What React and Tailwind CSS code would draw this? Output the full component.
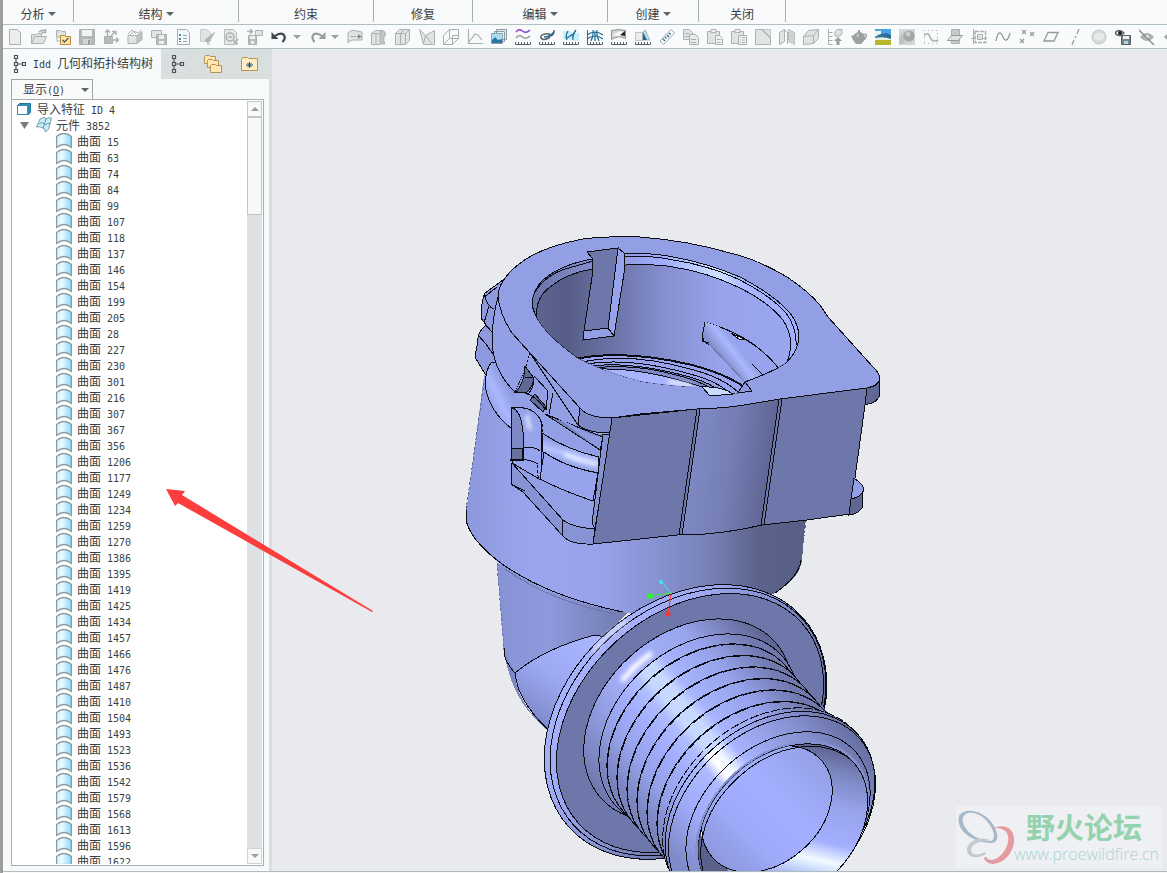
import React from 'react';

const GROUPS = [
    { name: '分析', menu: true, width: 'w-[71px]' },
    { name: '结构', menu: true, width: 'w-[165px]' },
    { name: '约束', menu: false, width: 'w-[135px]' },
    { name: '修复', menu: false, width: 'w-[99px]' },
    { name: '编辑', menu: true, width: 'w-[135px]' },
    { name: '创建', menu: true, width: 'w-[91px]' },
    { name: '关闭', menu: false, width: 'w-[87px]' },
];

const SURFACES = [
    15, 63, 74, 84, 99, 107, 118, 137, 146, 154, 199, 205, 28, 227, 230, 301,
    216, 307, 367, 356, 1206, 1177, 1249, 1234, 1259, 1270, 1386, 1395, 1419,
    1425, 1434, 1457, 1466, 1476, 1487, 1410, 1504, 1493, 1523, 1536, 1542,
    1579, 1568, 1613, 1596, 1622,
];

const G = '#acb0b0';
const L = '#e1e4e4';
const D = '#5b6062';
const B = '#1c6a92';

// little ruler under the measuring tools
const Ruler = () => <path d="M0.5 13v2.5h15V13M3.5 13v2M6.5 13v2M9.5 13v2M12.5 13v2" stroke={D} />;

const TOOLS = [
    ['新建', <path d="M2.500 0.500h8l3 3v12h-11z" fill="#eceeee" stroke={G} />],
    ['打开', <><path d="M0.500 14V5.500h5l1-1h4v3" fill={L} stroke={G} /><path d="M0.500 14.500l3-7h12l-3 7z" fill={L} stroke={G} /><path d="M8 3q3-3 6-1M14.500 0v3.500h-4" stroke={G} strokeWidth="1.500" /></>],
    ['选择工作目录', <><path d="M1.500 8V1.500h4l1 1h4V8z" fill={L} stroke={G} /><path d="M2 8v4h3" stroke={G} /><path d="M5.500 15.500v-9h4l1 1h5v8z" fill="#ffe3a3" stroke="#b98b43" /><path d="M7.500 11l2 2 4-4" stroke={D} strokeWidth="1.500" /></>],
    ['保存', <><path d="M0.500 0.500h15v15h-15z" fill="#b5b8b8" stroke={G} /><path d="M3 1h10v6H3z" fill="#f1f2f2" /><path d="M4 10h8v5H4z" fill="#d3d6d6" /><path d="M9 11h2v4H9z" fill="#999" /></>],
    ['拖动', <><path d="M1.500 7.500h8v7h-8z" fill="#b9bcbc" stroke={G} /><path d="M4.500 8V1M2 3.500L4.500 1 7 3.500M7 8l5-5M9 2.500h4V6M9 11h6M13 8.500l2.500 2.500-2.500 2.500" stroke={G} strokeWidth="1.500" /></>],
    ['模型', <><path d="M1 6.500h9v8H1z" fill={L} stroke={G} /><path d="M10 6.500l5-4v8l-5 4" fill="#bfc3c3" stroke={G} /><path d="M1 5l4-4 4 4M3 6l4-4 4 2 3-3" stroke={G} /></>],
    ['另存为', <><path d="M0.500 1.500h10v7h-10z" fill={L} stroke={G} /><path d="M5.500 5.500h10v10h-10z" fill="#b9bcbc" stroke={G} /><path d="M8 6h5v4H8zM8 12h5v3H8z" fill="#eee" /></>],
    ['属性', <><path d="M2.500 0.500h9l3 3v12h-12z" fill="#f5f8fa" stroke="#a3abaf" /><path d="M4 5h2v2H4zM4 9h2v2H4zM4 12h2v1H4z" fill="#4d87a5" /><path d="M8 6.500h4M8 9.500h4M8 12.500h4" stroke="#98a4a9" /></>],
    ['编辑', <><path d="M1.500 0.500h6l4 3v9h-10z" fill={L} stroke="#c8cccc" /><path d="M15.500 3.500L9 14l-3-3z" fill="#b5b8b8" stroke={G} /><path d="M8 15h3" stroke={G} /></>],
    ['查找', <><path d="M1.500 0.500h9l3 3v12h-12z" fill="#e6e8e8" stroke="#bbbfbf" /><circle cx="7" cy="8" r="4" stroke={G} strokeWidth="1.500" /><path d="M10 11l5 4M15 10l-4 5M5 8h4" stroke={G} strokeWidth="1.500" /></>],
    ['再生', <><path d="M1.500 6.500h8v9h-8z" fill="#b9bcbc" stroke={G} /><path d="M3 7h5v3H3zM4 12h3v3H4z" fill="#eee" /><path d="M8.500 1.500h7v5h-7z" fill={L} stroke={G} /><path d="M0 2.500h5M3 0l2.500 2.500L3 5" stroke={G} strokeWidth="1.500" /></>],
    ['撤消', <><path d="M4 7q5-4 8.500-1.500 3 3.500-1 7.500" stroke="#3f474b" strokeWidth="2.200" /><path d="M0.500 3v7h7z" fill="#3f474b" /></>, 'menu1'],
    ['重做', <><path d="M12 7Q7 3 3.500 5.500 1 9 4.500 13" stroke="#999e9e" strokeWidth="2.200" /><path d="M15.500 3v7h-7z" fill="#999e9e" /></>, 'menu2'],
    ['传送', <><path d="M1 14V4q3-4 9-2l5 1v8H6q-3 0-5 3z" fill={L} stroke={G} /><path d="M4 7.500h8" stroke="#8d9191" strokeDasharray="2 1" /><path d="M11 5l4 2.500-4 2.500z" fill="#8d9191" /></>],
    ['曲面', <><path d="M0.500 4.500l4-3h7v11l-3 3h-8z" fill={L} stroke={G} /><path d="M5 4v11M0.500 4.500H8" stroke={G} /><path d="M9 2h4q3 3 0 6-1 3 1 7H9z" fill="#c2c5c5" stroke={G} /></>],
    ['实体', <><path d="M0.500 4.500l4-4h10v11l-4 4h-10z" fill={L} stroke={G} /><path d="M0.500 4.500h10v11M10.500 4.500l4-4M5.500 4.500v11M5.500 4.500l4-4" stroke={G} /></>],
    ['修补', <><path d="M0.500 0.500l6 6 9-5v14h-11z" fill={L} stroke={G} /><path d="M6.500 6.500l-2 8M6.500 6.500l6 8" stroke={G} /></>],
    ['框架', <path d="M6.500 0.500h9v9h-9zM0.500 6.500l6-6M0.500 6.500v9h9l6-6M0.500 15.500l6-6M9.500 15.500V6.500h6" stroke={G} />],
    ['曲线图', <path d="M1.500 0v14.500H16M2 13l6-8 3 1 4 5" stroke={G} strokeWidth="1.200" />],
    ['图像', <><path d="M5.500 0.500h10v10h-10zM3.500 2.500h10v10h-10z" fill="#e7eff3" stroke="#8a9aa2" /><path d="M0.500 4.500h11v10H0.500z" fill="#a9def2" stroke="#8fa2ac" /><path d="M1 11l3-3 3 3 4-1v4H1z" fill="#25789f" /></>],
    ['曲率', <><path d="M1 3q3-4 6.500-1t7.500-1" stroke="#8a44cf" strokeWidth="1.500" /><path d="M1 9q3-4 6.500-1t7.500-1" stroke="#9aa0a0" strokeWidth="1.500" /><Ruler /></>],
    ['偏移', <><path d="M11 8.500Q4 12 2 9q-1-3 4-4 6-1 5 2 4 0 4-6" stroke={D} strokeWidth="1.500" /><path d="M5 8q6 0 10-5" stroke={B} strokeWidth="1.500" /><Ruler /></>],
    ['截面', <><path d="M0 3q4-3 8 0t8 0v8q-4 2-8 0t-8 0z" fill="#c4eefa" /><path d="M5 2q-3 5-1 9M13 1q-4 5-3 10M4 9l8-5" stroke={B} strokeWidth="1.300" /><Ruler /></>],
    ['网格', <><path d="M0 6q8-6 16 0M0 10q8-6 16 0M6 1q1 5-2 11M10 1q-1 5 2 11M8 3v9" stroke={B} strokeWidth="1.200" /><path d="M0.500 1v14" stroke={D} /><Ruler /></>],
    ['着色曲率', <><path d="M0.500 1.500q8-2 14 0v8q-7-4-14 1z" fill="#d3d5d5" stroke="#8d9292" /><path d="M2 6q6-5 11-3-3 5-6 4z" fill="#f7f7f7" /><path d="M9 6l5-4v5z" fill="#222" /><Ruler /></>],
    ['拔模', <><path d="M0.500 3.500h7v8h-7z" fill="#ededed" stroke="#c3c7c7" /><path d="M7.500 3l3-2 4 10h-7z" fill="#c4dde8" stroke="#a1b1b8" /><path d="M8 3l4 8H8z" fill={B} /><Ruler /></>],
    ['测量', <><path d="M1 12L12 0.500l3.500 3.500-11 11.500z" fill="#fff" stroke="#98a4a9" /><path d="M4 10l2 2M6 8l1.500 1.500M8 6l2 2M10 4l1.500 1.500" stroke={B} strokeWidth="1.300" /></>],
    ['复制', <><path d="M0.500 0.500h6l3 3v7h-9z" fill={L} stroke={G} /><path d="M6.500 5.500h6l3 3v7h-9z" fill="#e9ebeb" stroke={G} /><path d="M2 4.500h4M2 7.500h4M8 10.500h5M8 13.500h5" stroke={G} /></>],
    ['粘贴', <><path d="M0.500 2.500h12v12h-12z" fill={L} stroke={G} /><path d="M4 0.500h5v3H4z" fill="#eee" stroke={G} /><path d="M8.500 6.500h4l3 3v6h-7z" fill="#f1f2f2" stroke={G} /><path d="M10 10.500h4M10 13.500h4" stroke={G} /></>],
    ['选择性粘贴', <><path d="M0.500 2.500h12v12h-12z" fill={L} stroke={G} /><path d="M4 0.500h5v3H4z" fill="#eee" stroke={G} /><path d="M7.500 6.500h8v9h-8z" fill="#f1f2f2" stroke={G} /><path d="M9 8.500h1M11 8.500h3M9 11h1M11 11h3M9 13.500h1M11 13.500h3" stroke={G} /></>],
    ['倒角', <><path d="M0.500 0.500h15v15h-15z" fill={L} stroke={G} /><path d="M7 0.500h8.500V9z" fill="#dde0e0" /><path d="M7 0.500L15.500 9" stroke="#7f8484" /></>],
    ['镜像', <><path d="M0.500 3.500l5-3v12l-5 3z" fill={L} stroke={G} /><path d="M5.500 1l3 2v12" stroke={G} /><path d="M9.500 0.500l6 3v12l-6-3z" fill="#cfd2d2" stroke={G} strokeDasharray="2 1" /></>],
    ['箱体', <><path d="M0.500 7.500l5-6 10-1v9l-5 5-10 1z" fill={L} stroke={G} /><path d="M0.500 7.500l10-1v8M10.500 6.500l5-6" stroke={G} /></>],
    ['层级', <><path d="M1.500 0v15.500M1.500 3.500h4M1.500 7.500h4M1.500 11.500h4M1.500 15.500h4" stroke={G} /><path d="M8 3l2-2.500h5V5l-2 2H8z" fill={L} stroke={G} /><path d="M11 8l4 4h-2.500v4h-3v-4H7z" fill="#999d9d" /></>],
    ['渲染', <><path d="M7 1h2v2q4 1 5 5-1 5-4 7H5Q3 13 0 7l3-1q1-2 4-3z" fill="#9da1a1" /><path d="M12.500 5q4 0 2.500 3t-3 3" stroke="#8f9393" strokeWidth="1.200" /><path d="M5 6l3-1-1 4z" fill="#cfd2d2" /></>],
    ['场景', <><path d="M0 0h16v16H0z" fill="#4aa5e3" /><path d="M0 2h6v5H0z" fill="#e8f6fb" /><path d="M0 9l3-3 3-1 5-1 5 2v4H0z" fill="#2d6f94" /><path d="M0 9q8-2 16 1v1H0z" fill="#e9f2df" /><path d="M0 11h16v5H0z" fill="#b6b72f" /></>],
    ['外观', <><path d="M0 0h16v16H0z" fill="#d3d6d6" /><path d="M0 16V8l6-6v12z" fill="#bfc3c3" /><circle cx="10" cy="7" r="5.500" fill="#a3a7a7" /><circle cx="9" cy="5" r="2.500" fill="#c9cccc" /></>],
    ['点阵', <><path d="M1 1.500h14M1 14.500h14" stroke={G} strokeDasharray="1 3" /><path d="M1.500 4v9M14.500 4v9" stroke={G} strokeDasharray="1 3" /><path d="M1 7q4-5 6 1t8 3" stroke="#a9adad" strokeWidth="1.500" /></>],
    ['基准平面', <><path d="M4.500 0.500h8v14h-8z" fill="#c6caca" stroke={G} /><path d="M0.500 11.500l4-5h11l-4 5z" fill="#eceeee" fillOpacity="0.7" stroke="#949898" /></>],
    ['边界', <><path d="M4 2.500h10.500v11H4z" stroke={G} strokeWidth="1.500" strokeDasharray="4 1" /><path d="M6.500 5.500h5v5h-5z" fill={L} stroke={G} /><path d="M0 9.500h5M2.500 0v15M12 9.500h4" stroke={G} /></>],
    ['样条', <path d="M1 12C3 1 6 3 8 8s5 4 7-4" stroke="#979b9b" strokeWidth="1.300" />],
    ['基准点', <path d="M3 1l4 4M7 1L3 5M11 3l4 4M15 3l-4 4M1 10l4 4M5 10l-4 4" stroke="#979b9b" strokeWidth="1.300" />],
    ['草绘平面', <path d="M5 3.500h10l-4 8.500H1z" stroke="#979b9b" strokeWidth="1.300" />],
    ['基准轴', <path d="M12 0l-2 5M9 7l-1 2M7 11l-2 5" stroke="#979b9b" strokeWidth="1.300" />],
    ['球体', <><circle cx="8" cy="8" r="7" fill="#d6d9d9" stroke="#c3c7c7" /><path d="M3 5q5-3 10 0v5q-5 3-10 0z" fill="#e6e9e9" /></>],
    ['保存视图', <><path d="M0 4q4-5 9 0-5 5-9 0z" fill="#fff" stroke={D} strokeWidth="1.500" /><circle cx="5" cy="4" r="2" fill="#222" /><path d="M6.500 6.500h9v9h-9z" fill="#7d8285" stroke={D} /><path d="M8 7h6v3H8z" fill="#eee" /><path d="M9 12h4v3H9z" fill="#a9d9ee" /></>],
    ['隐藏', <><path d="M1 8q7-8 14 0-7 8-14 0z" fill="#acb0b0" /><circle cx="8" cy="8" r="2" fill="#eee" /><path d="M0 1l15 15" stroke="#7f8484" strokeWidth="1.300" /></>],
    ['显示', <path d="M1 8q7-8 14 0-7 8-14 0z" fill="#a0a4a4" />],
];

const Icon = ({ children, className = 'size-4' }) => (
    <svg viewBox="0 0 16 16" fill="none" className={`shrink-0 ${className}`}>{children}</svg>
);

const Caret = ({ color = '#5f6466' }) => (
    <svg viewBox="0 0 8 4" className="h-1 w-2 shrink-0"><path d="M0 0h8L4 4z" fill={color} /></svg>
);

// latin characters sit on a 6px grid beside the 12px Chinese glyphs
const Mono = ({ children }) => (
    <span className="whitespace-pre font-['DejaVu_Sans_Mono',monospace] text-[10px]">{children}</span>
);

const TreeGlyph = () => (
    <svg viewBox="0 0 14 20" fill="none" className="h-5 w-[14px] shrink-0">
        <path d="M1.500 1.500h3v3h-3zM1.500 8.500h3v3h-3zM1.500 15.500h3v3h-3zM9.500 8.500h3v3h-3zM3 5v3M3 12v3M5 10h4" stroke="#4b5052" strokeWidth="1.200" />
    </svg>
);

const FolderPath = ({ x = 0, y = 0 }) => (
    <path transform={`translate(${x} ${y})`} d="M0.500 1.500l1-1h4l1 1h5v7h-11z" fill="#ffe6b0" stroke="#b89358" />
);

const Ribbon = () => (
    <nav className="flex h-[25px] shrink-0 items-start border-b border-[#b0c0bf]">
        {GROUPS.map((g) => (
            <button key={g.name} className={`flex h-[22px] items-center justify-center gap-[3px] border-r border-[#a9adad] pt-[5px] ${g.width}`}>
                <span>{g.name}</span>
                {g.menu && <Caret />}
            </button>
        ))}
    </nav>
);

const Toolbar = () => (
    <div className="flex h-6 shrink-0 items-center overflow-hidden border-b border-[#b0c0bf]">
        {TOOLS.map(([label, art, menu]) => (
            <React.Fragment key={label}>
                <button aria-label={label} className="flex w-6 shrink-0 justify-center"><Icon>{art}</Icon></button>
                {menu && (
                    <button aria-label={`${label}列表`} className={`flex shrink-0 ${menu === 'menu1' ? 'w-[15px] pl-[2px]' : 'w-[13px] pl-[1px]'}`}>
                        <Caret color="#9a9e9e" />
                    </button>
                )}
            </React.Fragment>
        ))}
    </div>
);

const SurfaceIcon = () => (
    <Icon>
        <path d="M0.500 3.500Q8-2.500 15.500 3.500v11Q8 8.500 0.500 14.500z" fill="url(#sheet)" stroke="#8a9aa2" strokeWidth="1.400" />
    </Icon>
);

const Tree = () => (
    <div className="flex min-h-0 flex-1 border border-[#a9adad] bg-white p-px">
        <ul className="min-w-0 flex-1 overflow-hidden">
            <li className="flex h-4 items-center gap-1 pl-1">
                <Icon><path d="M0.500 4.500l2-2h11v9l-2 2h-11z" fill="#2f8fb8" stroke="#24759a" /><path d="M0.500 4.500h10v9h-10z" fill="#fff" stroke="#3a8db0" /></Icon>
                <span className="pt-px">导入特征<Mono> ID 4</Mono></span>
            </li>
            <li className="flex h-4 items-center pl-[7px]">
                <button aria-label="折叠" className="flex w-4 shrink-0"><svg viewBox="0 0 9 7" className="h-[7px] w-[9px]"><path d="M0 0h9L4.500 7z" fill="#777c7e" /></svg></button>
                <Icon><path d="M0.500 10L4 2q5-3 6 0 2-2 5.500-1l-3 11-3 3q-1-5-3-4-3-2-6-1z" fill="#c6effb" stroke="#7f9aa6" /><path d="M10 2L7 11M3 7q4-3 6 1 3-3 5-1" stroke="#5f95ae" /></Icon>
                <span className="pt-px pl-1">元件<Mono> 3852</Mono></span>
            </li>
            {SURFACES.map((id) => (
                <li key={id} className="flex h-4 items-center gap-[5px] pl-[43px]">
                    <SurfaceIcon />
                    <span className="pt-px">曲面<Mono> {id}</Mono></span>
                </li>
            ))}
        </ul>
        <div className="flex w-[15px] shrink-0 flex-col bg-[#dee1e3]">
            <button aria-label="向上滚动" className="flex h-4 items-center justify-center border border-[#c4c8c8] bg-[#f7f8f8]">
                <svg viewBox="0 0 8 4" className="h-1 w-2"><path d="M0 4h8L4 0z" fill="#9a9e9e" /></svg>
            </button>
            <div className="h-[98px] border border-[#c0c4c4] bg-[#f7f8f8]" />
            <div className="flex-1" />
            <button aria-label="向下滚动" className="flex h-4 items-center justify-center border border-[#d0d4d4] bg-[#f7f8f8]"><Caret color="#9a9e9e" /></button>
        </div>
    </div>
);

const Sidebar = () => (
    <aside className="flex w-[269px] shrink-0 flex-col bg-[#d9dfdf]">
        <div className="flex h-[30px] shrink-0">
            <button className="flex w-[158px] items-center gap-[6px] overflow-hidden bg-[#f7fafb] pr-2 pl-[10px]">
                <TreeGlyph />
                <span className="overflow-hidden whitespace-nowrap"><Mono>Idd </Mono>几何和拓扑结构树</span>
            </button>
            <div className="flex flex-1 items-center gap-[18px] pl-[10px]">
                <button aria-label="模型树"><TreeGlyph /></button>
                <button aria-label="文件夹浏览器">
                    <svg viewBox="0 0 20 20" fill="none" className="size-5"><FolderPath x={1} y={1} /><FolderPath x={4} y={5} /><FolderPath x={7} y={10} /></svg>
                </button>
                <button aria-label="收藏夹">
                    <svg viewBox="0 0 18 16" fill="none" className="h-4 w-[18px]"><path d="M0.500 3.500l1-2h5l1 1h9v12h-16z" fill="#ffedc6" stroke="#b89358" /><path d="M8.500 6v6M5 9h7M6.500 7l4 4M10.500 7l-4 4" stroke="#1c5b78" /></svg>
                </button>
            </div>
        </div>
        <div className="mr-[3px] flex min-h-0 flex-1 flex-col bg-[#f7fafb] pr-[5px] pb-[5px] pl-2">
            <button className="flex h-5 w-[82px] shrink-0 items-center justify-between border border-b-0 border-[#a0a5a5] bg-[#f9fafa] pr-[3px] pl-[11px]">
                <span>显示<Mono>(<u>O</u>)</Mono></span>
                <Caret />
            </button>
            <Tree />
        </div>
    </aside>
);

// all rings of the spout share one tilt; drawn as arcs so that the shading stays in drawing space
const COS = Math.cos((42 * Math.PI) / 180);
const SIN = Math.sin((42 * Math.PI) / 180);
const Ring = ({ cx, cy, rx, ry, fill = 'none', ...rest }) => {
    const dx = rx * COS;
    const dy = rx * SIN;
    const d = `M${cx - dx} ${cy + dy}A${rx} ${ry} -42 0 1 ${cx + dx} ${cy - dy}A${rx} ${ry} -42 0 1 ${cx - dx} ${cy + dy}Z`;
    return <path d={d} fill={fill} {...rest} />;
};

const Stops = ({ list }) => list.map(([at, color]) => <stop key={at} offset={at} stopColor={color} />);

const HOLE = 'M532 303Q533 290 543 280Q560 265 592 259L623 253Q655 253 673 257Q707 263 740 277Q773 294 790 313Q799 325 799 337Q798 351 787 362Q777 369 763 375L745 382L752 391L710 396L702 387Q668 386 640 381Q615 374 597 367L578 358Q560 345 550 335Q533 317 532 303Z';
const TOP = 'M612 418L640 414L697 409Q730 408 750 404L780 399L867 388Q880 385 880 378Q880 374 873 367L828 317L820 305Q808 291 787 277Q757 259 730 253Q690 241 640 237Q605 236 583 239Q545 246 523 261Q498 279 498 297Q500 315 512 333L530 353L580 408Q588 418 612 418Z';

const Model = () => (
    <svg viewBox="272 49 895 822" preserveAspectRatio="xMinYMin slice" className="size-full" fill="none" stroke="#0b0c12" strokeWidth="1" shapeRendering="crispEdges">
        <defs>
            <linearGradient id="barrel" gradientUnits="userSpaceOnUse" x1="466" y1="0" x2="806" y2="0">
                <Stops list={[[0, '#8c97dc'], [0.2, '#9ba6ef'], [0.4, '#97a2ea'], [0.6, '#838ecb'], [0.72, '#7781b6'], [0.86, '#5b628b'], [1, '#575e86']]} />
            </linearGradient>
            <linearGradient id="neck" gradientUnits="userSpaceOnUse" x1="497" y1="0" x2="620" y2="0">
                <Stops list={[[0, '#8792d4'], [0.4, '#8f9ade'], [1, '#737db3']]} />
            </linearGradient>
            <linearGradient id="elbow" gradientUnits="userSpaceOnUse" x1="585" y1="640" x2="530" y2="715">
                <Stops list={[[0, '#a8b4ff'], [0.5, '#9da9f3'], [1, '#808bcc']]} />
            </linearGradient>
            <linearGradient id="bore" gradientUnits="userSpaceOnUse" x1="535" y1="0" x2="795" y2="0">
                <Stops list={[[0, '#5d6591'], [0.12, '#565d87'], [0.3, '#6a73a6'], [0.5, '#8690d0'], [0.72, '#98a3ec'], [1, '#9aa6f0']]} />
            </linearGradient>
            <linearGradient id="ledge" gradientUnits="userSpaceOnUse" x1="535" y1="0" x2="798" y2="0">
                <Stops list={[[0, '#6b75a9'], [0.3, '#8c97dc'], [0.5, '#a3afff'], [0.62, '#bccfff'], [0.7, '#cfe2ff'], [0.8, '#a8b5ff'], [1, '#a3afff']]} />
            </linearGradient>
            <linearGradient id="wave" gradientUnits="userSpaceOnUse" x1="690" y1="460" x2="775" y2="471">
                <Stops list={[[0, '#7e89c5'], [0.45, '#757fb4'], [1, '#5c6390']]} />
            </linearGradient>
            <linearGradient id="flange" gradientUnits="userSpaceOnUse" x1="570" y1="640" x2="790" y2="790">
                <Stops list={[[0, '#aab6ff'], [0.3, '#9da9f3'], [0.65, '#7882bc'], [1, '#5c6490']]} />
            </linearGradient>
            <linearGradient id="hub" gradientUnits="userSpaceOnUse" x1="605" y1="800" x2="775" y2="648">
                <Stops list={[[0, '#6f79ae'], [0.2, '#8c97da'], [0.45, '#a8b4ff'], [0.75, '#98a4ed'], [1, '#5f6794']]} />
            </linearGradient>
            <linearGradient id="thread" gradientUnits="userSpaceOnUse" x1="628" y1="801" x2="780" y2="675">
                <Stops list={[[0, '#7882bb'], [0.16, '#94a0e8'], [0.33, '#a4b0ff'], [0.42, '#aebcff'], [0.47, '#c6d8ff'], [0.54, '#c8daff'], [0.6, '#a8b4ff'], [0.8, '#97a2ec'], [1, '#6f79ae']]} />
            </linearGradient>
            <linearGradient id="lip" gradientUnits="userSpaceOnUse" x1="628" y1="801" x2="800" y2="658">
                <Stops list={[[0, '#7f8ac8'], [0.2, '#a0acfa'], [0.36, '#adbaff'], [0.41, '#ffffff'], [0.45, '#f3f9ff'], [0.52, '#a8b4ff'], [0.78, '#8792d3'], [1, '#616a99']]} />
            </linearGradient>
            <linearGradient id="mouth" gradientUnits="userSpaceOnUse" x1="830" y1="750" x2="800" y2="880">
                <Stops list={[[0, '#5f6794'], [0.15, '#7a85be'], [0.4, '#98a3ec'], [0.68, '#a3afff'], [0.82, '#f0faff'], [0.88, '#d4e4ff'], [1, '#9ca8f2']]} />
            </linearGradient>
            <linearGradient id="core" gradientUnits="userSpaceOnUse" x1="715" y1="860" x2="820" y2="755">
                <Stops list={[[0, '#8d98de'], [0.3, '#9faafa'], [0.6, '#a3afff'], [1, '#949fe6']]} />
            </linearGradient>
            <linearGradient id="rib" gradientUnits="userSpaceOnUse" x1="720" y1="360" x2="742" y2="343">
                <Stops list={[[0, '#7a85c0'], [0.55, '#abb8ff'], [1, '#8792d4']]} />
            </linearGradient>
            <linearGradient id="band" gradientUnits="userSpaceOnUse" x1="570" y1="444" x2="564" y2="464">
                <Stops list={[[0, '#8f9ae0'], [0.5, '#b3c2ff'], [1, '#939fe6']]} />
            </linearGradient>
            <linearGradient id="bead" gradientUnits="userSpaceOnUse" x1="486" y1="405" x2="512" y2="392">
                <Stops list={[[0, '#8f9ae0'], [0.5, '#abb8ff'], [1, '#8c97db']]} />
            </linearGradient>
            <linearGradient id="sheet"><Stops list={[[0, '#c9f1fd'], [0.35, '#effcff'], [1, '#84d9f5']]} /></linearGradient>
            <filter id="soft" filterUnits="userSpaceOnUse" x="450" y="220" width="450" height="651"><feGaussianBlur stdDeviation="2" /></filter>
            <clipPath id="holeClip"><path d={HOLE} /></clipPath>
            <clipPath id="mouthClip"><Ring cx={783} cy={826} rx={95} ry={70} /></clipPath>
        </defs>

        {/* neck and elbow */}
        <path d="M497 563L504 655Q508 668 515 673L600 640L640 600L600 590Z" fill="url(#neck)" stroke="none" />
        <path d="M515 673Q545 648 595 635L620 640L560 740Q518 706 515 673Z" fill="url(#elbow)" />
        <path d="M504 650Q508 680 522 702Q532 717 546 729L530 711Q515 690 515 673Z" fill="#7d88c6" stroke="none" />
        <path d="M504 648V655Q508 666 515 673" />
        <path d="M497 563L504 650" stroke="#6d77a9" strokeDasharray="3 2" />

        {/* barrel */}
        <path d="M484 375L466 514Q465 535 498 562Q545 597 620 612L700 620L775 593Q800 578 802 560L806 510L600 400Z" fill="url(#barrel)" stroke="none" />
        <path d="M466 506V520Q470 539 498 561Q545 596 623 612M775 593Q799 577 801 560" />
        <path d="M505 569Q550 601 615 614" stroke="#6d77a9" />
        <path d="M484 383L466 510M806 520L801 560" stroke="#606894" strokeDasharray="3 2" />

        {/* flange */}
        <Ring cx={685.5} cy={722} rx={157} ry={119} fill="url(#flange)" />
        <Ring cx={688} cy={722} rx={154} ry={115} />
        <Ring cx={690} cy={723} rx={150} ry={110} fill="#6d77a9" />
        <path d="M594 651Q607 634 627 621" stroke="#e9f4ff" strokeWidth="3" filter="url(#soft)" />
        <Ring cx={688} cy={720} rx={117} ry={86} fill="url(#hub)" />
        <path d="M622 681Q634 665 652 653" stroke="#fff" strokeWidth="5" filter="url(#soft)" />

        {/* threaded spout */}
        <path d="M624 808L690 885L850 738L786 664Z" fill="url(#thread)" stroke="none" />
        <Ring cx={699} cy={731} rx={112} ry={83} fill="url(#thread)" />
        {[0, 1, 2, 3, 4, 5, 6].map((k) => (
            <g key={k}>
                <Ring cx={704 + k * 10} cy={738 + k * 11.5} rx={109} ry={80} fill="url(#thread)" />
                <Ring cx={704.5 + k * 10} cy={738.5 + k * 11.5} rx={109} ry={80} strokeDasharray="14 5" />
            </g>
        ))}
        <Ring cx={767} cy={809} rx={117} ry={86} fill="url(#thread)" strokeDasharray="9 2" />
        <Ring cx={770} cy={813} rx={118} ry={86} fill="url(#lip)" />
        <Ring cx={772} cy={816} rx={117} ry={84} />
        <Ring cx={778} cy={821} rx={104} ry={75} fill="url(#lip)" />
        <Ring cx={782} cy={825} rx={98} ry={71} fill="#8590d0" stroke="none" />
        <Ring cx={783} cy={826} rx={95} ry={70} fill="url(#mouth)" />
        <g clipPath="url(#mouthClip)">
            <path d="M695 815Q700 850 740 880H690Z" fill="#5a618b" stroke="none" />
            <Ring cx={767} cy={809} rx={73} ry={54} fill="url(#core)" />
            <Ring cx={785} cy={828} rx={95} ry={69} />
        </g>

        {/* lugs and bead on the left of the collar */}
        <path d="M503 280L485 293Q481 302 482 313L481 318L486 325Q477 333 478 340L475 357L485 374L515 400L530 360L510 320Z" fill="#8e99de" />
        <path d="M485 297Q487 306 494 309M483 298L497 287M478 335Q486 343 493 354M489 306L484 323L492 332" />
        <path d="M492 362Q484 370 486 390Q491 413 512 429L520 440L540 420L515 392Q500 374 497 362Z" fill="url(#bead)" />
        <path d="M498 297Q492 318 492 343Q494 372 515 392L525 371L530 353Q500 322 498 297Z" fill="#939fe6" />

        {/* latch bay */}
        <path d="M515 392L525 371L530 353L580 408L612 418L594 530L577 527L563 520L512 463V408Z" fill="#939fe4" stroke="none" />
        <path d="M515 392Q524 385 525 366L534 378Q532 388 527 392Z" fill="#606894" />
        <path d="M525 377H534Q534 388 528 394" />
        <path d="M535 394L546 407L543 412L530 400Z" fill="#626b9a" />
        <path d="M515 392Q533 391 546 410L548 390M553 393L549 414M530 353L578 425M534 376L548 391" />
        <path d="M512 408Q536 405 542 424L541 480L512 463Z" fill="#97a3ec" />
        <path d="M512 408Q521 410 523 432V460H511Z" fill="#7d88c4" />
        <path d="M511 448H523L522 460H511Z" fill="#69729f" />
        <path d="M523 448Q534 446 540 451M511 460Q525 457 538 464" />
        <path d="M528 415Q527 424 531 430" stroke="#f4faff" strokeWidth="3" filter="url(#soft)" />
        <path d="M545 414L580 428L603 437L600 450Z" fill="#7882bd" />
        <path d="M556 417L590 434L602 437L600 449Z" fill="#8e99e0" stroke="none" />
        <path d="M542 433Q567 450 599 457L598 473Q565 467 543 452Z" fill="url(#band)" />
        <path d="M564 454Q580 461 597 464" stroke="#fff" strokeWidth="3" filter="url(#soft)" />
        <path d="M544 452L540 479Q563 491 593 501L598 473Q565 467 544 452Z" fill="#97a3ec" />
        <path d="M542 424V445M537 465V475L541 480" strokeDasharray="3 2" />
        <path d="M512 463L563 520Q571 527 595 529L593 544Q570 545 562 535L523 492L511 484Z" fill="#8893d6" />
        <path d="M563 520L562 535M511 484L525 491" />
        <path d="M580 408L578 425Q588 433 610 433L612 418Q588 418 580 408Z" fill="#7d88c6" />
        <path d="M603 434L592 523L595 529L610 434Z" fill="#8691d2" />

        {/* front block */}
        <path d="M612 418L697 409Q730 408 750 404L780 399L867 388L865 405L850 514L807 520L762 525Q720 535 677 535L640 539L593 544Z" fill="#6d77a9" />
        <path d="M700 409Q730 408 750 404L779 399L762 525Q720 534 681 535Z" fill="url(#wave)" stroke="none" />
        <path d="M681 535Q720 535 762 525" />
        <path d="M697 409L679 535M700 409L682 535M779 399L761 525M782 399L764 525" />
        <path d="M867 388Q878 386 880 380L879 397Q874 405 865 404Z" fill="#5f6794" />
        <path d="M854 478Q864 485 864 490Q861 497 851 499Z" fill="#939fe4" />
        <path d="M851 499Q861 497 863 491L862 508Q858 514 849 515Z" fill="#5f6794" />

        {/* top face with bore */}
        <path d={TOP} fill="#939fe4" />
        <path d={HOLE} fill="url(#ledge)" />
        <g clipPath="url(#holeClip)">
            <path d="M537 320Q534 299 550 287Q567 273 593 269L626 265Q660 264 673 267Q707 272 740 288Q767 301 783 320Q796 340 787 362L763 385L700 400L600 372Q550 350 537 320Z" fill="url(#bore)" />
            <path d="M532 298Q540 279 562 270L593 261M623 256Q657 256 673 260Q707 265 738 279Q770 295 786 313Q797 328 796 345" />
            <path d="M578 359Q625 350 690 365Q725 374 745 388L735 400H640L590 370Z" fill="#97a3ec" />
            <path d="M578 358Q625 349 690 364Q725 373 745 387" />
            <path d="M582 362Q630 352 690 369Q722 377 738 392M586 364Q630 357 690 374Q715 380 730 393" />
            <path d="M590 366Q632 361 690 377Q712 383 725 395L600 385Z" fill="#7d88c6" />
            <path d="M594 368Q635 363 680 376Q708 383 719 396" />
            <path d="M600 369Q645 368 702 387L710 396H640Z" fill="#a8b4ff" />
            <path d="M668 382L692 386" stroke="#eaf5ff" strokeWidth="4" filter="url(#soft)" />
        </g>
        <path d="M702 387L710 396L733 394Q722 386 702 387Z" fill="#c9dcff" />
        <path d="M741 388L745 382L752 391L738 393Z" fill="#8e99de" />

        {/* keyway */}
        <path d="M587 252L618 248L608 328L584 331L593 270L592 258Z" fill="#6d77a9" />
        <path d="M618 248L624 253L625 267L614 336L608 328Z" fill="#97a3ec" />
        <path d="M584 331L608 328L614 336L583 340Z" fill="#939fe4" />

        {/* rib */}
        <path d="M705 322Q740 333 757 347Q773 360 778 368L763 375L703 341Z" fill="#97a3ee" />
        <path d="M705 322L720 327L763 375L745 382L708 343L702 337Z" fill="url(#rib)" stroke="none" />
        <path d="M720 327Q737 333 757 347M705 322L702 337V341L709 343M745 382L763 375M752 364L763 375" />
        <path d="M708 343L745 382" stroke="#6d77a9" />
        <path d="M731 333L744 339L740 340Z" fill="#eef6ff" />

        {/* coordinate triad */}
        <g strokeWidth="1" shapeRendering="auto">
            <path d="M671 593L661 581" stroke="#35eef5" />
            <path d="M671 593L650 596" stroke="#35f035" />
            <path d="M671 594L668 614" stroke="#ff3333" />
            <circle cx="661" cy="582" r="2" fill="#35eef5" stroke="none" />
            <circle cx="650" cy="596" r="3" fill="#2ff52f" stroke="none" />
            <circle cx="668" cy="614" r="2.500" fill="#ff3333" stroke="none" />
        </g>
    </svg>
);

const Watermark = () => (
    <div className="absolute right-[5px] bottom-[3px] flex h-[62px] w-[206px] bg-white/30">
        <svg viewBox="0 0 58 60" fill="none" className="h-[60px] w-[58px] shrink-0">
            <path fillRule="evenodd" fill="#a7b8c8" d="M3 10C8 1 28 3 38 20C44 31 41 37 36 37C22 38-1 27 3 10ZM7 11C4 24 24 36 35 35C39 33 39 28 35 21C27 6 11 3 7 11Z" />
            <path fillRule="evenodd" fill="#e59a9f" d="M38 22C53 16 61 27 57 41C52 56 37 61 31 56C28 54 27 51 30 51C33 57 44 54 50 42C56 29 50 21 38 22Z" />
            <path fillRule="evenodd" fill="#c3c9d2" d="M11 44C11 35 24 30 33 34L31 36C23 34 15 39 15 44C15 49 22 50 29 46L30 48C20 54 11 51 11 44Z" />
        </svg>
        <div className="flex flex-col whitespace-nowrap pt-1">
            <span className="pl-3 font-['Noto_Sans_CJK_SC',sans-serif] text-[29px] leading-8 font-bold text-[#94d3ae]">野火论坛</span>
            <span className="font-['Open_Sans',sans-serif] text-base leading-6 font-light text-[#a9d3d3]">www.proewildfire.cn</span>
        </div>
    </div>
);

const App = () => (
    <div className="relative flex h-screen flex-col overflow-hidden border-l-[3px] border-[#9d9d9d] bg-[#f8fafc] font-['Noto_Sans_CJK_SC',sans-serif] text-xs leading-4 text-[#3c3f41]">
        <Ribbon />
        <Toolbar />
        <div className="flex min-h-0 flex-1 border-b border-[#b0bcc0]">
            <Sidebar />
            <main className="relative min-w-0 flex-1 overflow-hidden bg-[#e8eaee]">
                <Model />
                <Watermark />
            </main>
        </div>
        <div className="h-px shrink-0" />
        {/* pointer to the surface list */}
        <svg viewBox="0 0 207 123" className="pointer-events-none absolute top-[489px] left-[163px] h-[123px] w-[207px]">
            <path d="M0 0L19 2L16 6L207 122L206 123L12 14L9 17Z" fill="#fb3d3d" />
        </svg>
    </div>
);

export default App;
